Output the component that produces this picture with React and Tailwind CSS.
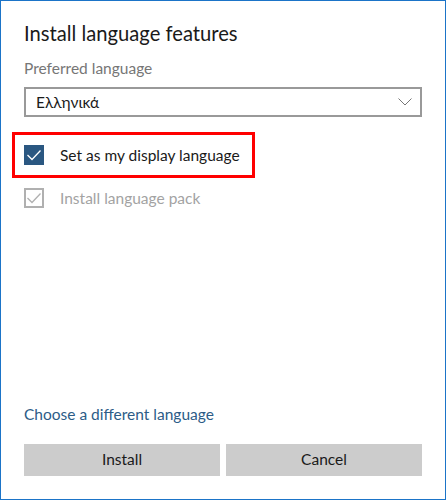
import { useState } from 'react';

function Check({ color }) {
  return (
    <svg width="20" height="20" viewBox="0 0 20 20" className="block">
      <path d="M3.5 10 L8 14.5 L16.5 5.5" fill="none" stroke={color} strokeWidth="1.3" />
    </svg>
  );
}

export default function App() {
  const [display, setDisplay] = useState(true);

  return (
    <div
      className="w-[446px] h-[500px] border border-[#1b74c8] bg-white flex flex-col pt-[18px] pb-[23px] px-[23px] text-[#1a1a1a]"
      style={{ fontFamily: 'Lato, "Noto Sans", "Liberation Sans", sans-serif' }}
    >
      <h1 className="text-[20.2px] leading-[28px] font-normal">Install language features</h1>

      <div className="mt-[11px] text-[15.5px] leading-[20px] text-[#767676]">Preferred language</div>

      <div className="mt-[9px] h-[30px] border-2 border-[#999999] flex items-center justify-between pl-[10px] pr-[8px]">
        <span className="text-[15.5px] leading-[20px]">Ελληνικά</span>
        <svg width="14" height="8" viewBox="0 0 14 8">
          <path d="M0.5 0.5 L7 7 L13.5 0.5" fill="none" stroke="#777" strokeWidth="1" />
        </svg>
      </div>

      <div className="mt-[15px] -ml-3 w-[243px] h-[46px] border-[3px] border-[#ff0000] flex items-center pl-[9px]">
        <button
          onClick={() => setDisplay(!display)}
          className="w-5 h-5 bg-[#2a5781] flex items-center justify-center"
        >
          {display && <Check color="#ffffff" />}
        </button>
        <span className="ml-4 text-[15.5px] leading-[20px]">Set as my display language</span>
      </div>

      <div className="mt-[10px] flex items-center">
        <div className="w-5 h-5 border-2 border-[#b0b0b0] flex items-center justify-center">
          <svg width="16" height="16" viewBox="2 2 16 16" className="block">
            <path d="M3.5 10 L8 14.5 L16.5 5.5" fill="none" stroke="#b0b0b0" strokeWidth="1.3" />
          </svg>
        </div>
        <span className="ml-4 text-[15.5px] leading-[20px] text-[#a3a3a3]">Install language pack</span>
      </div>

      <div className="flex-1" />

      <a className="text-[15.5px] leading-[20px] text-[#2c5c87] cursor-pointer">Choose a different language</a>

      <div className="mt-[20px] flex gap-[6px]">
        <button className="flex-1 h-[32px] bg-[#cccccc] text-[15.5px] text-[#1a1a1a]">Install</button>
        <button className="flex-1 h-[32px] bg-[#cccccc] text-[15.5px] text-[#1a1a1a]">Cancel</button>
      </div>
    </div>
  );
}
